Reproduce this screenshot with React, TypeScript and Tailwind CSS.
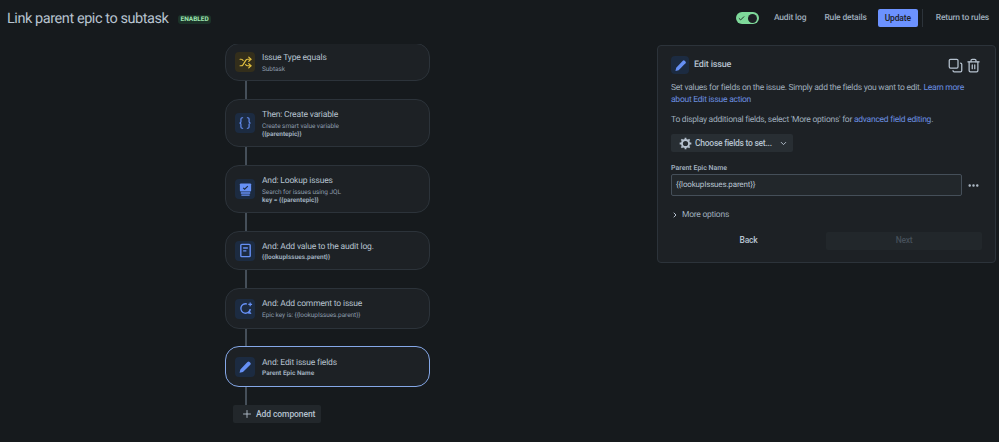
import type { ReactNode } from 'react'
import { Braces, Check, ChevronDown, ChevronRight, Copy, Ellipsis, Plus, Shuffle, Trash2 } from 'lucide-react'

const BLUE = '#6690f5'

function PencilIcon({ size = 14 }: { size?: number }) {
  return (
    <svg width={size} height={size} viewBox="0 0 16 16" fill={BLUE}>
      <path d="M10.9 2.2a1.6 1.6 0 0 1 2.3 0l.9.9a1.6 1.6 0 0 1 0 2.3l-1.2 1.2-3.2-3.2zM9.7 3.4l3.2 3.2-7.2 7.2-3.9.9.9-3.9z" />
    </svg>
  )
}

function LookupIcon() {
  return (
    <svg width="15" height="15" viewBox="0 0 16 16" fill="none">
      <rect x="2" y="1.5" width="12" height="8.5" rx="1" fill={BLUE} />
      <path d="M5.5 6.2l1.6 1.5 3.4-3.4" stroke="#1c2b41" strokeWidth="1.2" />
      <path d="M3 11h10v1.4H3zM3.6 13.2h8.8v1.4H3.6z" fill={BLUE} />
    </svg>
  )
}

function AuditIcon() {
  return (
    <svg width="15" height="15" viewBox="0 0 16 16" fill="none">
      <rect x="3" y="1.5" width="10" height="13" rx="1" stroke={BLUE} strokeWidth="1.5" />
      <path d="M5.5 4.6h5v1.5h-5zM5.5 7.6h3.4v1.5H5.5z" fill={BLUE} />
    </svg>
  )
}

function CommentIcon() {
  return (
    <svg width="15" height="15" viewBox="0 0 16 16" fill="none">
      <path d="M9.4 3.2A5 5 0 1 0 13 8.6c0 1.1-.3 2-.9 2.8l.9 1.6-2.4-.4" stroke={BLUE} strokeWidth="1.5" />
      <path d="M13 1.5v4M11 3.5h4" stroke={BLUE} strokeWidth="1.3" />
    </svg>
  )
}

function GearIcon() {
  return (
    <svg width="13" height="13" viewBox="0 0 16 16" fill="none" stroke="currentColor">
      <circle cx="8" cy="8" r="4.4" strokeWidth="2.4" />
      <path
        d="M8 .8v2.4M8 12.8v2.4M.8 8h2.4M12.8 8h2.4M2.9 2.9l1.7 1.7M11.4 11.4l1.7 1.7M2.9 13.1l1.7-1.7M11.4 4.6l1.7-1.7"
        strokeWidth="2.2"
      />
    </svg>
  )
}

function RuleCard({
  icon,
  title,
  sub,
  bold,
  yellow,
  selected,
  className,
}: {
  icon: ReactNode
  title: string
  sub?: string
  bold?: string
  yellow?: boolean
  selected?: boolean
  className: string
}) {
  return (
    <div
      className={`flex items-center gap-[7px] rounded-[14px] border bg-[#1d2125] pl-[9px] pr-2 ${className} ${
        selected ? 'border-[1.5px] border-[#85a8e8]' : 'border-[#2c333a]'
      }`}
    >
      <div className={`flex h-[20px] w-[20px] shrink-0 items-center justify-center rounded-[4px] ${yellow ? 'bg-[#332e1b]' : 'bg-[#1c2b41]'}`}>
        {icon}
      </div>
      <div className="min-w-0">
        <div className="text-[8.5px] leading-[12px] tracking-[-0.02em] text-[#b6c2cf]">{title}</div>
        {sub && <div className="mt-[1px] text-[6.5px] leading-[8px] tracking-[-0.01em] text-[#8c9bab]">{sub}</div>}
        {bold && <div className="mt-[1px] text-[6.5px] font-bold leading-[7px] text-[#9fadbc]">{bold}</div>}
      </div>
    </div>
  )
}

function Connector({ h = 'h-[18px]' }: { h?: string }) {
  return <div className={`ml-[20px] w-[1.5px] bg-[#454f59] ${h}`} />
}

export default function App() {
  return (
    <div className="h-[442px] w-[999px] overflow-hidden bg-[#161a1d] font-['Roboto',sans-serif] [text-rendering:geometricPrecision]">
      <header className="flex h-[44px] items-start justify-between">
        <div className="flex items-center gap-[10px] pl-[7px] pt-[8px]">
          <h1 className="text-[14.5px] leading-[22px] tracking-[-0.03em] text-[#b6c2cf]">Link parent epic to subtask</h1>
          <span className="rounded-[3px] bg-[#1c3329] px-[2px] text-[6.5px] font-bold leading-[9px] text-[#9fe5b0]">ENABLED</span>
        </div>
        <div className="flex items-center pr-[10px] pt-[9px] text-[8.5px] font-medium tracking-[-0.02em] text-[#9fadbc]">
          <div className="mr-[15px] flex h-[12px] w-[23px] items-center justify-between rounded-full bg-[#7ed99a] px-[2px]">
            <Check size={7} strokeWidth={3} className="text-[#161a1d]" />
            <div className="h-[9px] w-[9px] rounded-full bg-[#1d2125]" />
          </div>
          <span className="mr-[18px]">Audit log</span>
          <span className="mr-[11px]">Rule details</span>
          <button className="mr-[4px] h-[18px] w-[40px] rounded-[2px] bg-[#6c92ff] text-[8.5px] font-medium text-[#1d2125]">Update</button>
          <div className="mr-[13px] h-[18px] w-[1px] bg-[#2c333a]" />
          <span>Return to rules</span>
        </div>
      </header>

      <main className="flex h-[398px] overflow-hidden pl-[225px]">
        <section className="w-[205px] shrink-0">
          <RuleCard
            className="-mt-[1px] h-[38px]"
            yellow
            icon={<Shuffle size={13} strokeWidth={2.25} className="text-[#e2c040]" />}
            title="Issue Type equals"
            sub="Subtask"
          />
          <Connector />
          <RuleCard
            className="h-[48px]"
            icon={<Braces size={14} strokeWidth={2} className="text-[#6690f5]" />}
            title="Then: Create variable"
            sub="Create smart value variable"
            bold="{{parentepic}}"
          />
          <Connector />
          <RuleCard
            className="h-[48px]"
            icon={<LookupIcon />}
            title="And: Lookup issues"
            sub="Search for issues using JQL"
            bold="key = {{parentepic}}"
          />
          <Connector />
          <RuleCard className="h-[39px]" icon={<AuditIcon />} title="And: Add value to the audit log." bold="{{lookupIssues.parent}}" />
          <Connector />
          <RuleCard className="h-[41px]" icon={<CommentIcon />} title="And: Add comment to issue" sub="Epic key is: {{lookupIssues.parent}}" />
          <Connector h="h-[17px]" />
          <RuleCard className="h-[41px]" selected icon={<PencilIcon />} title="And: Edit issue fields" bold="Parent Epic Name" />
          <Connector />
          <button className="ml-[8px] flex h-[18px] w-[88px] items-center gap-[3px] whitespace-nowrap rounded-[2px] bg-[#22272b] pl-[8px] text-[8.5px] font-medium tracking-[-0.01em] text-[#b6c2cf]">
            <Plus size={12} strokeWidth={1.75} />
            Add component
          </button>
        </section>

        <aside className="ml-[227px] mt-[1px] h-[218px] w-[339px] shrink-0 rounded-[4px] border border-[#2c333a] bg-[#1d2125] px-[13px] pt-[10px] text-[8.5px] tracking-[-0.03em] text-[#9fadbc]">
          <div className="flex items-center justify-between">
            <div className="flex items-center gap-[5px]">
              <div className="flex h-[18px] w-[18px] items-center justify-center rounded-[4px] bg-[#1c2b41]">
                <PencilIcon size={13} />
              </div>
              <span className="pt-[1px] text-[9px] font-medium tracking-[-0.02em] text-[#b6c2cf]">Edit issue</span>
            </div>
            <div className="flex items-center gap-[3px] pr-[1px] text-[#b6c2cf]">
              <Copy size={15} strokeWidth={2} className="-scale-100" />
              <Trash2 size={15} strokeWidth={2} />
            </div>
          </div>
          <p className="mt-[8px] leading-[12px]">
            Set values for fields on the issue. Simply add the fields you want to edit. <span className="text-[#6b8fe0]">Learn more about Edit issue action</span>
          </p>
          <p className="mt-[8px] leading-[12px]">
            To display additional fields, select 'More options' for <span className="text-[#6b8fe0]">advanced field editing</span>.
          </p>
          <button className="mt-[8px] flex h-[18px] w-[122px] items-center gap-[3px] whitespace-nowrap rounded-[2px] bg-[#282e33] pl-[8px] text-[8.5px] font-medium text-[#b6c2cf]">
            <GearIcon />
            Choose fields to set...
            <ChevronDown size={9} strokeWidth={2.5} className="ml-[4px]" />
          </button>
          <label className="mt-[11px] block text-[7px] font-semibold leading-[10px] tracking-normal text-[#9fadbc]">Parent Epic Name</label>
          <div className="mt-[1px] flex items-center">
            <div className="flex h-[22px] w-[291px] items-center rounded-[2px] border border-[#454f59] bg-[#22272b] pl-[4px] text-[8px] tracking-[-0.02em] text-[#b6c2cf]">
              {'{{lookupIssues.parent}}'}
            </div>
            <Ellipsis size={13} strokeWidth={2.5} className="ml-[5px] text-[#b6c2cf]" />
          </div>
          <div className="mt-[13px] flex items-center gap-[3px]">
            <ChevronRight size={8} strokeWidth={3} className="text-[#b6c2cf]" />
            More options
          </div>
          <div className="mt-[10px] flex items-center">
            <button className="h-[18px] w-[155px] text-[8.5px] font-medium text-[#b6c2cf]">Back</button>
            <button className="h-[18px] flex-1 rounded-[2px] bg-[#22272b] text-[8.5px] font-medium text-[#454f59]">Next</button>
          </div>
        </aside>
      </main>
    </div>
  )
}
